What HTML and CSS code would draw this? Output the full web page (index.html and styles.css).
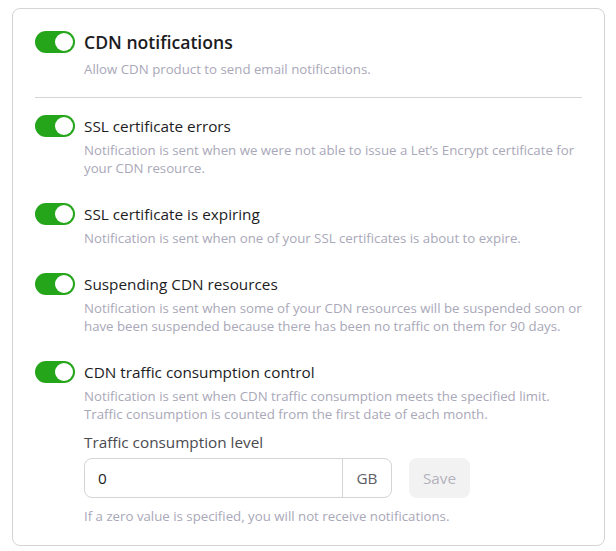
FILE: index.html
```html
<!DOCTYPE html>
<html lang="en">

<head>
    <meta charset="UTF-8" />
    <title>CDN notifications</title>
    <link rel="stylesheet" href="styles.css">
</head>

<body>

    <section class="card">
        <div class="item item-main">
            <div class="item-head">
                <span class="toggle on"><span class="knob"></span></span>
                <h2>CDN notifications</h2>
            </div>
            <p class="desc">Allow CDN product to send email notifications.</p>
        </div>

        <hr class="divider">

        <div class="item">
            <div class="item-head">
                <span class="toggle on"><span class="knob"></span></span>
                <h3>SSL certificate errors</h3>
            </div>
            <p class="desc">Notification is sent when we were not able to issue a Let’s Encrypt certificate for your CDN resource.</p>
        </div>

        <div class="item">
            <div class="item-head">
                <span class="toggle on"><span class="knob"></span></span>
                <h3>SSL certificate is expiring</h3>
            </div>
            <p class="desc">Notification is sent when one of your SSL certificates is about to expire.</p>
        </div>

        <div class="item">
            <div class="item-head">
                <span class="toggle on"><span class="knob"></span></span>
                <h3>Suspending CDN resources</h3>
            </div>
            <p class="desc">Notification is sent when some of your CDN resources will be suspended soon or have been suspended because there has been no traffic on them for 90 days.</p>
        </div>

        <div class="item">
            <div class="item-head">
                <span class="toggle on"><span class="knob"></span></span>
                <h3>CDN traffic consumption control</h3>
            </div>
            <p class="desc">Notification is sent when CDN traffic consumption meets the specified limit. Traffic consumption is counted from the first date of each month.</p>

            <div class="limit">
                <label class="limit-label" for="limit">Traffic consumption level</label>
                <div class="limit-row">
                    <div class="input-group">
                        <input id="limit" value="0">
                        <span class="addon">GB</span>
                    </div>
                    <button class="btn-save" disabled>Save</button>
                </div>
                <p class="hint">If a zero value is specified, you will not receive notifications.</p>
            </div>
        </div>
    </section>

</body>

</html>
```

FILE: styles.css
```css
* {
    margin: 0;
    padding: 0;
    box-sizing: border-box;
}

body {
    font-family: "Open Sans", "Noto Sans", sans-serif;
    background: #fff;
    color: #1c1c1e;
    margin: 8px 11px 0 12px;
}

.card {
    border: 1px solid #d4d4d4;
    border-radius: 8px;
    padding: 22px 22px 19px;
    height: 538px;
}

.item-head {
    display: flex;
    align-items: center;
    gap: 9px;
}

.item-head h2 {
    font-size: 17.6px;
    font-weight: 600;
    line-height: 22px;
}

.item-head h3 {
    font-size: 15.3px;
    font-weight: 400;
    line-height: 22px;
}

.toggle {
    width: 40px;
    height: 22px;
    border-radius: 11px;
    background: #d0d0d0;
    display: flex;
    align-items: center;
    padding: 2px;
    flex-shrink: 0;
}

.toggle.on {
    background: #25a51a;
    justify-content: flex-end;
}

.knob {
    width: 18px;
    height: 18px;
    border-radius: 50%;
    background: #fff;
}

.desc {
    font-size: 13.25px;
    line-height: 18px;
    color: #a9a8b8;
    margin: 4px 0 0 49px;
}

.item-main .desc {
    margin-top: 7px;
}

.item + .item {
    margin-top: 26px;
}

.divider {
    border: none;
    border-top: 1px solid #d4d4d4;
    margin: 19px 0 17px;
}

.limit {
    margin: 7px 0 0 49px;
}

.limit-label {
    display: block;
    font-size: 15.3px;
    line-height: 24px;
    color: #4a4a4f;
}

.limit-row {
    display: flex;
    gap: 17px;
    margin-top: 4px;
}

.input-group {
    display: flex;
    width: 308px;
    height: 40px;
    border: 1px solid #d4d4d4;
    border-radius: 8px;
}

.input-group input {
    flex: 1;
    min-width: 0;
    border: none;
    background: transparent;
    font: inherit;
    font-size: 15.3px;
    color: #1c1c1e;
    padding: 0 13px;
    outline: none;
}

.addon {
    width: 49px;
    border-left: 1px solid #d4d4d4;
    display: flex;
    align-items: center;
    justify-content: center;
    font-size: 15.3px;
    color: #5e5e66;
}

.btn-save {
    width: 61px;
    height: 40px;
    border: none;
    border-radius: 8px;
    background: #f2f2f3;
    color: #b3b3bb;
    font: inherit;
    font-size: 15.3px;
}

.hint {
    font-size: 13.25px;
    line-height: 18px;
    color: #a9a8b8;
    margin-top: 9px;
}
```
